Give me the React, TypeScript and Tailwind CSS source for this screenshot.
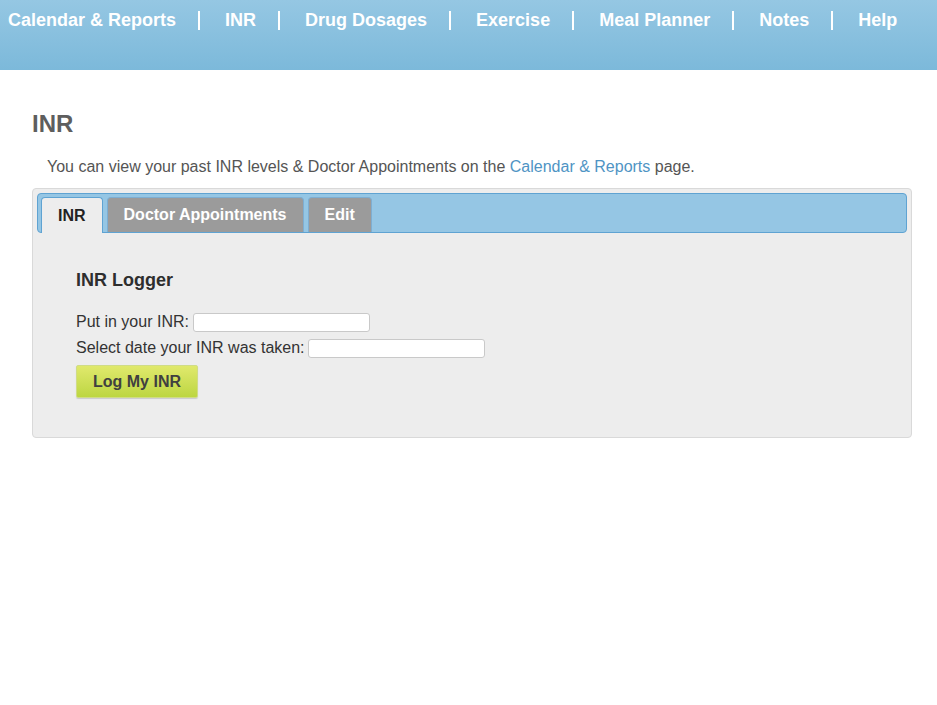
import React from "react";

const navItems = [
  "Calendar & Reports",
  "INR",
  "Drug Dosages",
  "Exercise",
  "Meal Planner",
  "Notes",
  "Help",
];

function Header() {
  return (
    <header className="h-[70px] bg-gradient-to-b from-[#95c7e3] to-[#7cb9da]">
      <nav className="flex items-center pl-[8px] pt-[10px]">
        {navItems.map((item, i) => (
          <React.Fragment key={item}>
            {i > 0 && (
              <>
                <span className="ml-[22px] h-[19px] w-[2px] bg-white" />
                <span className="w-[25px]" />
              </>
            )}
            <a className="text-[18px] font-bold leading-[20px] text-white cursor-pointer">
              {item}
            </a>
          </React.Fragment>
        ))}
      </nav>
    </header>
  );
}

function Tabs() {
  return (
    <div className="flex h-[40px] items-end gap-[4px] rounded-[4px] border border-[#5fa3d2] bg-[#95c6e4] pl-[3px]">
      <div className="mb-[-1px] flex h-[36px] items-center rounded-t-[4px] border border-b-0 border-[#5fa3d2] bg-[#ededed] px-[16px] text-[16px] font-bold leading-[16px] text-[#222]">
        INR
      </div>
      <div className="flex h-[35px] items-center rounded-t-[4px] border border-b-0 border-[#7eaed2] bg-[#9b9b9b] px-[16px] text-[16px] font-bold leading-[16px] text-white">
        Doctor Appointments
      </div>
      <div className="flex h-[35px] items-center rounded-t-[4px] border border-b-0 border-[#7eaed2] bg-[#9b9b9b] px-[16px] text-[16px] font-bold leading-[16px] text-white">
        Edit
      </div>
    </div>
  );
}

export default function App() {
  return (
    <div
      className="min-h-[705px] bg-white"
      style={{ fontFamily: '"Liberation Sans", Arial, sans-serif' }}
    >
      <Header />
      <main className="pl-[32px]">
        <h1 className="mt-[42px] text-[24px] font-bold leading-[24px] text-[#5e5e5e]">
          INR
        </h1>
        <p className="ml-[15px] mt-[23px] text-[16px] leading-[16px] text-[#555]">
          You can view your past INR levels &amp; Doctor Appointments on the{" "}
          <a className="text-[#4f94c4] cursor-pointer">Calendar &amp; Reports</a> page.
        </p>
        <section className="mt-[13px] w-[880px] rounded-[4px] border border-[#d9d9d9] bg-[#ededed] p-[4px]">
          <Tabs />
          <div className="pl-[39px] pt-[38px] pb-[35px] text-[#333]">
            <h2 className="mb-[20px] text-[18px] font-bold leading-[18px] text-[#2e2e2e]">
              INR Logger
            </h2>
            <div className="flex h-[26px] items-center text-[16px] leading-[16px]">
              <label>Put in your INR:</label>
              <input
                type="text"
                className="ml-[4px] h-[19px] w-[177px] rounded-[3px] border border-[#c9c9c9] bg-white outline-none"
              />
            </div>
            <div className="flex h-[26px] items-center text-[16px] leading-[16px]">
              <label>Select date your INR was taken:</label>
              <input
                type="text"
                className="ml-[3px] h-[19px] w-[177px] rounded-[3px] border border-[#c9c9c9] bg-white outline-none"
              />
            </div>
            <button className="mt-[4px] h-[33px] w-[122px] rounded-[2px] border border-[#d0dc86] bg-gradient-to-b from-[#e0e96c] to-[#bdd640] text-[16px] font-bold leading-[16px] text-[#404040] shadow-[0_1px_1px_rgba(0,0,0,0.15)]">
              Log My INR
            </button>
          </div>
        </section>
      </main>
    </div>
  );
}
